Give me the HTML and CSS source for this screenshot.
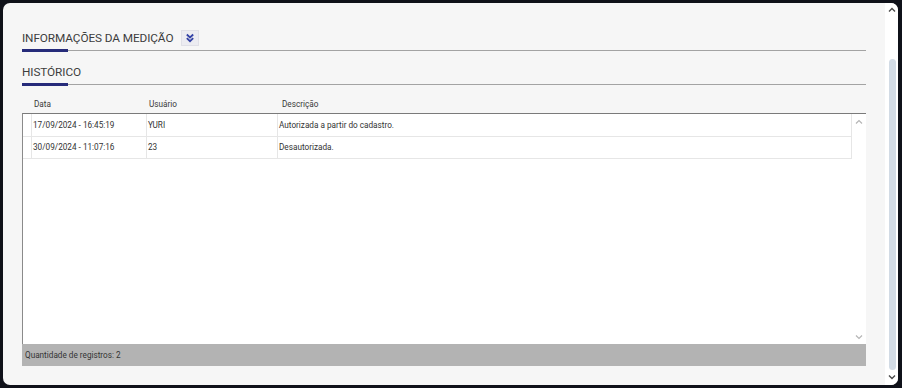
FILE: index.html
```html
<!DOCTYPE html>
<html lang="pt-BR">
<head>
    <meta charset="UTF-8">
    <title>Histórico da medição</title>
    <link rel="stylesheet" href="styles.css">
</head>
<body>

    <div class="panel">
        <div class="content">

            <!-- Informações da medição (recolhido) -->
            <div class="section">
                <div class="section-head">
                    <span class="section-title">INFORMAÇÕES DA MEDIÇÃO</span>
                    <button class="toggle" type="button">
                        <svg width="10" height="10" viewBox="0 0 10 10">
                            <polyline points="1.8,1.5 5,4.5 8.2,1.5" />
                            <polyline points="1.8,5.2 5,8.2 8.2,5.2" />
                        </svg>
                    </button>
                </div>
            </div>

            <!-- Histórico -->
            <div class="section section-history">
                <div class="section-head">
                    <span class="section-title">HISTÓRICO</span>
                </div>
            </div>

            <div class="grid">
                <div class="grid-header">
                    <div class="cell"></div>
                    <div class="cell">Data</div>
                    <div class="cell">Usuário</div>
                    <div class="cell cell-desc">Descrição</div>
                </div>

                <div class="grid-body">
                    <div class="rows">
                        <div class="row">
                            <div class="cell"></div>
                            <div class="cell">17/09/2024 - 16:45:19</div>
                            <div class="cell">YURI</div>
                            <div class="cell">Autorizada a partir do cadastro.</div>
                        </div>
                        <div class="row">
                            <div class="cell"></div>
                            <div class="cell">30/09/2024 - 11:07:16</div>
                            <div class="cell">23</div>
                            <div class="cell">Desautorizada.</div>
                        </div>
                    </div>
                    <div class="inner-scroll">
                        <svg width="8" height="6" viewBox="0 0 8 6"><polyline points="1,4.5 4,1.5 7,4.5" /></svg>
                        <svg width="8" height="6" viewBox="0 0 8 6"><polyline points="1,1.5 4,4.5 7,1.5" /></svg>
                    </div>
                </div>

                <div class="grid-footer">Quantidade de registros: 2</div>
            </div>

        </div>

        <!-- barra de rolagem da janela -->
        <div class="scrollbar">
            <svg width="8" height="6" viewBox="0 0 8 6"><polyline points="1,4.5 4,1.5 7,4.5" /></svg>
            <div class="thumb"></div>
            <svg width="8" height="6" viewBox="0 0 8 6"><polyline points="1,1.5 4,4.5 7,1.5" /></svg>
        </div>
    </div>

</body>
</html>
```

FILE: styles.css
```css
body {
    margin: 0;
    padding: 3px 4px 3px 3px;
    background-color: #0f1119;
    font-family: Roboto, "Liberation Sans", sans-serif;
    color: #333;
}

.panel {
    display: flex;
    height: 382px;
    background-color: #f6f6f6;
    border-radius: 7px;
    overflow: hidden;
}

.content {
    flex: 1;
    display: flex;
    flex-direction: column;
    padding: 26px 19px 19px 19px;
}

/* Section headings */
.section {
    position: relative;
    border-bottom: 1px solid #a3a3a3;
}
.section::after {
    content: "";
    position: absolute;
    left: 0;
    bottom: -2px;
    width: 46px;
    height: 3px;
    background-color: #262b7a;
}
.section-head {
    display: flex;
    align-items: center;
    gap: 8px;
    height: 18px;
    padding-bottom: 3px;
}
.section-title {
    font-size: 11.8px;
    color: #3d3d3d;
    letter-spacing: -0.1px;
}
.toggle {
    width: 18px;
    height: 16px;
    padding: 0;
    display: flex;
    align-items: center;
    justify-content: center;
    background-color: #ececf1;
    border: 1px solid #e0e0e7;
    cursor: pointer;
}
.toggle svg polyline {
    fill: none;
    stroke: #3443a6;
    stroke-width: 1.8;
}

.section-history {
    margin-top: 13px;
}
.section-history .section-head {
    height: 16px;
    padding-bottom: 4px;
}

/* Grid */
.grid {
    flex: 1;
    display: flex;
    flex-direction: column;
    margin-top: 13px;
    font-size: 8.2px;
}
.grid-header {
    display: grid;
    grid-template-columns: 10px 115px 131px 1fr;
    height: 15px;
    line-height: 13px;
    color: #3a3a3a;
}
.grid-header .cell {
    padding-left: 2px;
}
.grid-header .cell-desc {
    padding-left: 4px;
}

.grid-body {
    flex: 1;
    display: flex;
    background-color: #fff;
    border-top: 1px solid #7a7a7a;
    border-left: 1px solid #8a8a8a;
}
.rows {
    flex: 1;
}
.row {
    display: grid;
    grid-template-columns: 9px 115px 131px 1fr;
    height: 22px;
    line-height: 22px;
    border-bottom: 1px solid #e6e6e6;
    border-right: 1px solid #e6e6e6;
}
.row + .row {
    height: 21px;
    line-height: 21px;
}
.row .cell {
    border-right: 1px solid #e6e6e6;
    padding-left: 1px;
    white-space: nowrap;
}
.row .cell:last-child {
    border-right: none;
}

.inner-scroll {
    width: 14px;
    display: flex;
    flex-direction: column;
    justify-content: space-between;
    align-items: center;
    padding: 5px 0 4px;
}
.inner-scroll polyline {
    fill: none;
    stroke: #b5b5b5;
    stroke-width: 1.2;
}

.grid-footer {
    height: 22px;
    line-height: 22px;
    padding-left: 3px;
    background-color: #b3b3b3;
    color: #333;
}

/* Window scrollbar */
.scrollbar {
    width: 13px;
    background-color: #fff;
    display: flex;
    flex-direction: column;
    align-items: center;
    padding: 4px 0 5px;
}
.scrollbar polyline {
    fill: none;
    stroke: #4a4a4a;
    stroke-width: 1.4;
}
.thumb {
    flex: 1;
    width: 7px;
    margin: 46px 0 4px 1px;
    background-color: #d2dbe5;
    border-radius: 4px;
}
```
